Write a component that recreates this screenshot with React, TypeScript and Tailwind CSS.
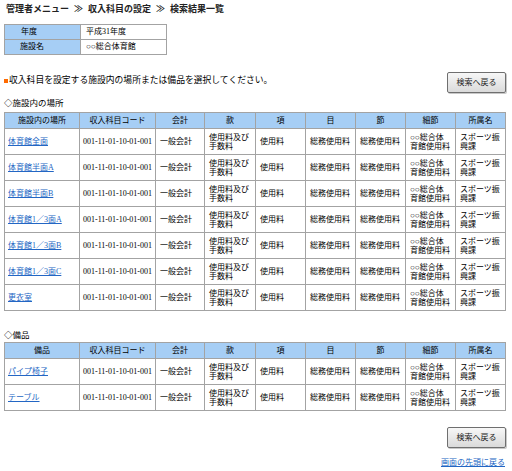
import React from 'react';

const places = [
  '体育館全面',
  '体育館半面A',
  '体育館半面B',
  '体育館1／3面A',
  '体育館1／3面B',
  '体育館1／3面C',
  '更衣室',
];

const items = ['パイプ椅子', 'テーブル'];

const cols = ['w-[75px]', 'w-[76px]', 'w-[49px]', 'w-[51px]', 'w-[50px]', 'w-[50px]', 'w-[50px]', 'w-[50px]', 'w-[50px]'];

function BackButton() {
  return (
    <button className="w-[59px] h-[21px] border border-[#6f6f6f] rounded-[2px] bg-gradient-to-b from-[#f7f7f7] to-[#dadada] text-[8px] leading-[10px] text-[#222] shadow-[1px_1px_0_#c8c8c8]">
      検索へ戻る
    </button>
  );
}

function ResultTable({ first, names }: { first: string; names: string[] }) {
  const th = 'border border-[#a3a3a3] bg-[#a6cef5] font-normal text-center px-[2px]';
  const td = 'border border-[#a3a3a3] text-left align-middle pl-[4px] pr-[2px]';
  return (
    <table className="w-[501px] table-fixed border-collapse text-[8px] leading-[9px]">
      <colgroup>
        {cols.map((c, i) => (
          <col key={i} className={c} />
        ))}
      </colgroup>
      <thead>
        <tr className="h-[16px]">
          <th className={th}>{first}</th>
          <th className={th}>収入科目コード</th>
          <th className={th}>会計</th>
          <th className={th}>款</th>
          <th className={th}>項</th>
          <th className={th}>目</th>
          <th className={th}>節</th>
          <th className={th}>細節</th>
          <th className={th}>所属名</th>
        </tr>
      </thead>
      <tbody>
        {names.map((n) => (
          <tr key={n} className="h-[26px]">
            <td className="border border-[#a3a3a3] align-middle pl-[3px] pr-[1px] whitespace-nowrap">
              <a href="#" className="text-[#2366c4] underline">{n}</a>
            </td>
            <td className="border border-[#a3a3a3] text-left align-middle pl-[3px] pr-0 whitespace-nowrap">
              001-11-01-10-01-001
            </td>
            <td className={td}>一般会計</td>
            <td className={td}>使用料及び<br />手数料</td>
            <td className={td}>使用料</td>
            <td className={td}>総務使用料</td>
            <td className={td}>総務使用料</td>
            <td className={td}>○○総合体<br />育館使用料</td>
            <td className={td}>スポーツ振<br />興課</td>
          </tr>
        ))}
      </tbody>
    </table>
  );
}

export default function App() {
  return (
    <div className="w-[512px] h-[471px] bg-white text-black px-[4px] pt-[4px] text-[8px] font-['Liberation_Serif','Noto_Sans_CJK_JP',serif]">
      {/* breadcrumb */}
      <div className="flex items-center h-[11px] text-[9px] leading-[11px] font-bold text-[#222] pl-[2px]">
        <span>管理者メニュー</span>
        <span className="mx-[5px]">≫</span>
        <span>収入科目の設定</span>
        <span className="mx-[5px]">≫</span>
        <span>検索結果一覧</span>
      </div>

      {/* conditions */}
      <table className="mt-[9px] w-[162px] table-fixed border-collapse text-[8px] leading-[10px]">
        <colgroup>
          <col className="w-[76px]" />
          <col className="w-[86px]" />
        </colgroup>
        <tbody>
          <tr className="h-[15px]">
            <td className="border border-[#a3a3a3] bg-[#a6cef5] pl-[16px]">年度</td>
            <td className="border border-[#a3a3a3] pl-[5px]">平成31年度</td>
          </tr>
          <tr className="h-[15px]">
            <td className="border border-[#a3a3a3] bg-[#a6cef5] pl-[15px]">施設名</td>
            <td className="border border-[#a3a3a3] pl-[5px]">○○総合体育館</td>
          </tr>
        </tbody>
      </table>

      <div className="mt-[17px] w-[502px] flex justify-between items-center">
        <p className="flex items-end text-[8.8px] leading-[10px] -mt-[6px]">
          <span className="inline-block w-[4px] h-[4px] bg-[#ff6a00] mr-[1px] mb-[2px]" />
          収入科目を設定する施設内の場所または備品を選択してください。
        </p>
        <BackButton />
      </div>

      <p className="mt-[5px] text-[8.5px] leading-[10px]">◇施設内の場所</p>
      <div className="mt-[4px]">
        <ResultTable first="施設内の場所" names={places} />
      </div>

      <p className="mt-[19px] text-[8.5px] leading-[10px]">◇備品</p>
      <div className="mt-[2px]">
        <ResultTable first="備品" names={items} />
      </div>

      <div className="mt-[16px] w-[502px] flex justify-end">
        <BackButton />
      </div>
      <div className="mt-[10px] w-[501px] flex justify-end leading-[10px]">
        <a href="#" className="text-[#2366c4] underline">画面の先頭に戻る</a>
      </div>
    </div>
  );
}
